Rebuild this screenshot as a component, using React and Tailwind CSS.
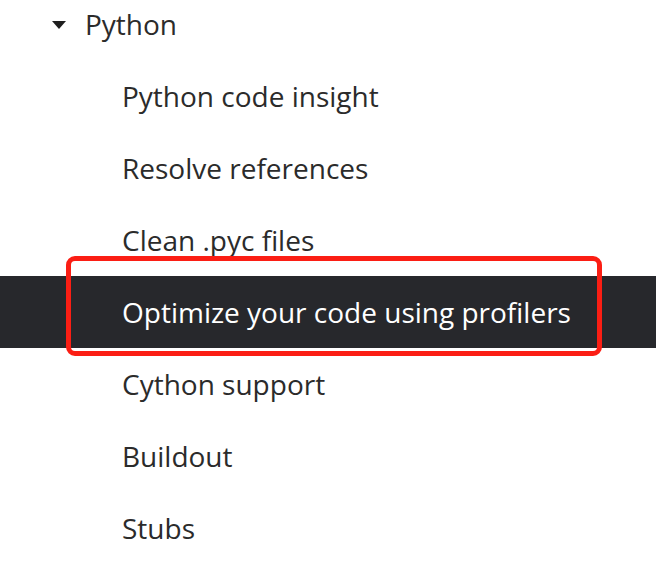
const children = [
  "Python code insight",
  "Resolve references",
  "Clean .pyc files",
  "Optimize your code using profilers",
  "Cython support",
  "Buildout",
  "Stubs",
];

const ACTIVE = "Optimize your code using profilers";

export default function App() {
  return (
    <div
      className="w-[656px] h-[577px] overflow-hidden bg-white text-[#2b2b2b] text-[28px]"
      style={{ fontFamily: '"Open Sans", "Noto Sans", sans-serif' }}
    >
      <ul className="-mt-[12px]">
        {/* parent node */}
        <li className="h-[72px] flex items-center pl-[51px]">
          <svg width="16" height="10" viewBox="0 0 16 10" className="mr-[18px] mt-[1px]">
            <path d="M1 1 L15 1 L8 9 Z" fill="#1f1f1f" />
          </svg>
          <span>Python</span>
        </li>

        {children.map((label) =>
          label === ACTIVE ? (
            <li key={label} className="relative h-[72px] flex items-center pl-[122px] bg-[#27282c] text-white">
              {label}
              {/* red highlight frame */}
              <span className="absolute left-[66px] top-[-20px] w-[536px] h-[100px] border-[5px] border-[#fb1e14] rounded-[9px] pointer-events-none" />
            </li>
          ) : (
            <li key={label} className="h-[72px] flex items-center pl-[122px]">
              {label}
            </li>
          )
        )}
      </ul>
    </div>
  );
}
